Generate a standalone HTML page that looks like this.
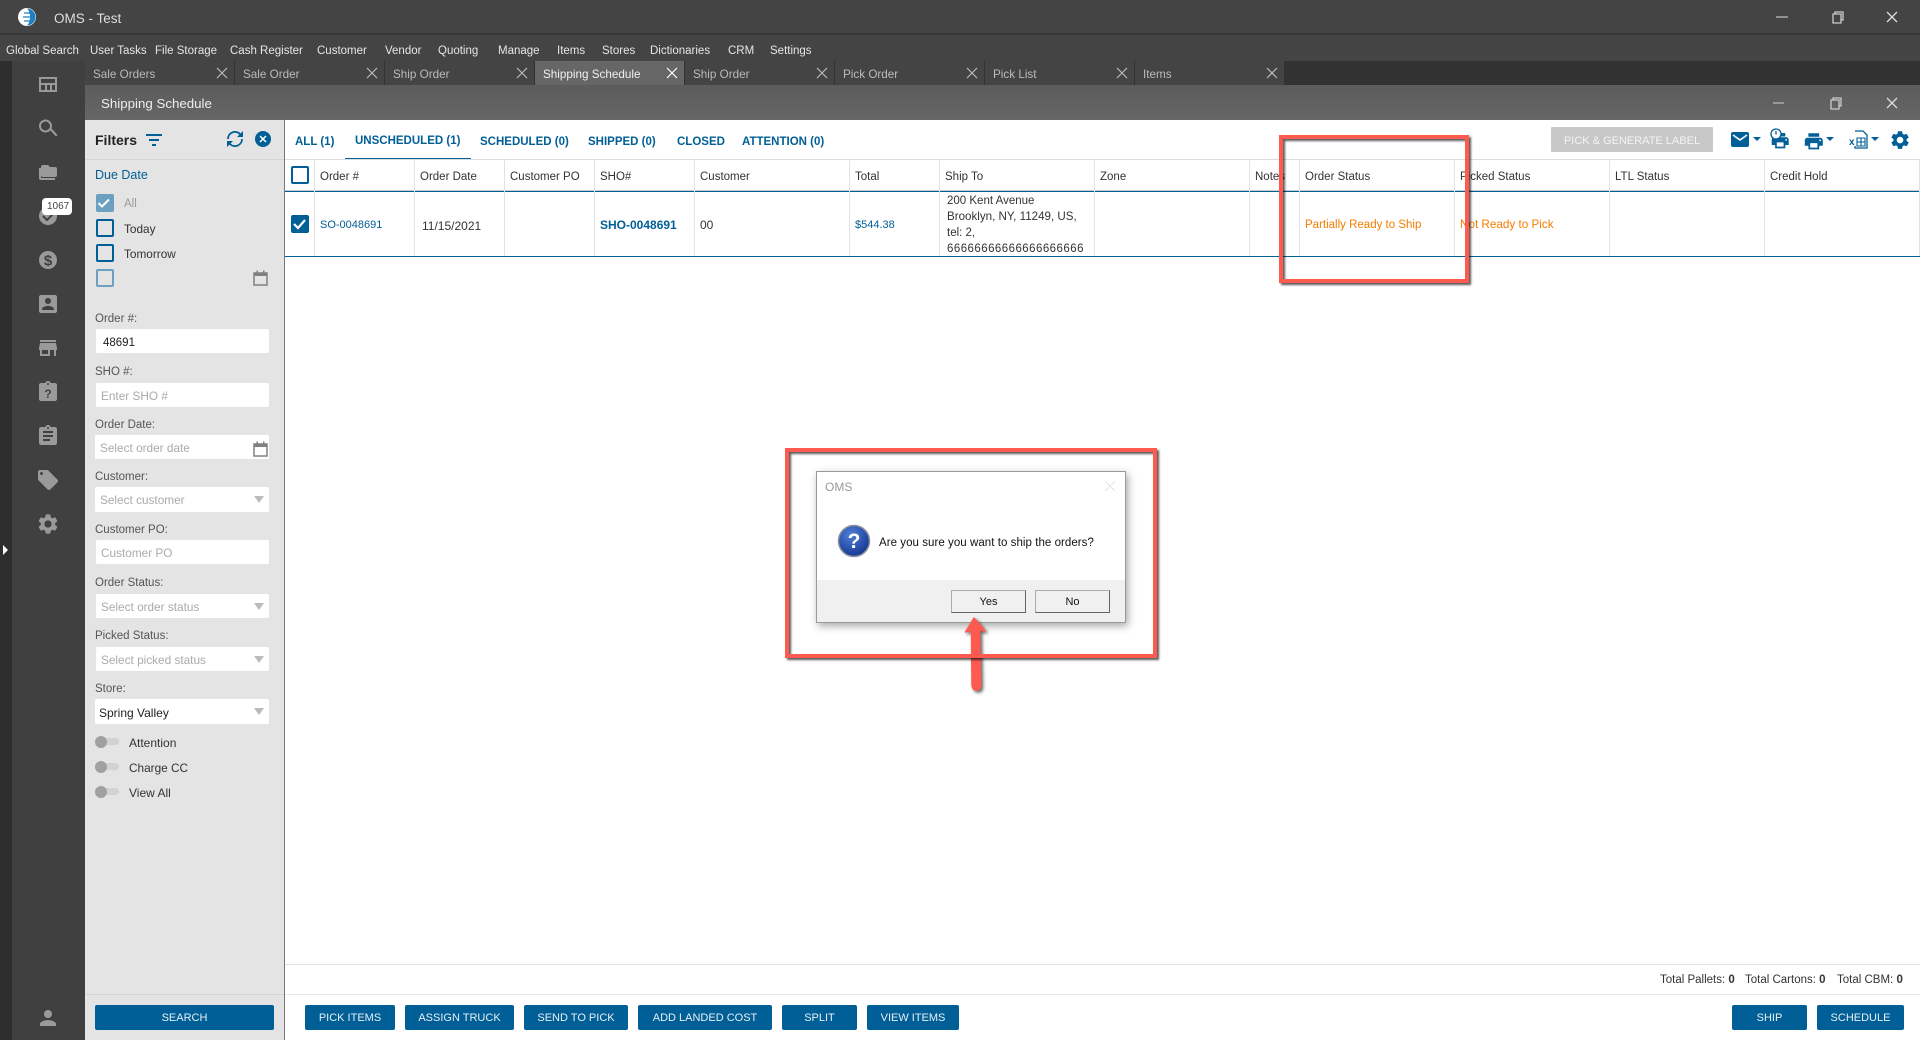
<!DOCTYPE html>
<html><head><meta charset="utf-8"><title>OMS - Test</title>
<style>
html,body{margin:0;padding:0;width:1920px;height:1040px;overflow:hidden;background:#fff;font-family:"Liberation Sans",sans-serif;}
div,span{position:absolute;box-sizing:border-box;}
.t{white-space:nowrap;line-height:16px;font-size:12px;color:#333;}
.m{color:#e6e6e6;font-size:11.5px;top:43px;}
.tab{top:61px;width:149px;height:24px;background:#444;}
.tab .t{left:8px;top:6px;color:#bbb;font-size:11.7px;}
.tab svg{position:absolute;left:131px;top:6px;}
.lb{left:95px;color:#555;font-size:11.5px;}
.in{left:96px;width:173px;height:24px;background:#fff;border-radius:2px;}
.in .t{left:5px;top:5px;color:#aaa;font-size:11.8px;}
.ar{width:0;height:0;border-left:5px solid transparent;border-right:5px solid transparent;border-top:7px solid #bbb;right:5px;top:9px;}
.cb{left:96px;width:18px;height:18px;border:2px solid #005f96;border-radius:2px;}
.tg{left:95px;width:24px;height:7px;border-radius:4px;background:#d2d2d2;}
.tg:after{content:"";position:absolute;left:0;top:-2.5px;width:12px;height:12px;border-radius:50%;background:#a0a0a0;}
.tab2{top:134px;color:#005f96;font-weight:bold;font-size:11.5px;}
.h{top:169px;color:#333;font-size:11.5px;}
.v{top:160px;width:1px;height:96px;background:#dfe5e8;}
.btn{top:1005px;height:25px;background:#005f96;border-radius:2px;color:#e8f0f5;font-size:11px;line-height:27px;text-align:center;white-space:nowrap;}
.red{border:4px solid #ff5a4f;box-shadow:2px 2px 2px rgba(0,0,0,.65),inset 2px 2px 2px rgba(0,0,0,.65);}
</style></head><body>

<div style="left:0;top:0;width:1920px;height:61px;background:#444"></div>
<div style="left:0;top:33px;width:1920px;height:2px;background:#383838"></div>
<div style="left:0;top:61px;width:1920px;height:24px;background:#323232"></div>
<div style="left:0;top:61px;width:12px;height:979px;background:#2e2e2e"></div>
<div style="left:12px;top:61px;width:73px;height:979px;background:#404040"></div>
<div style="left:85px;top:85px;width:1835px;height:35px;background:linear-gradient(#5c5c5c,#666)"></div>

<span class="t" style="left:54px;top:11px;font-size:13.5px;color:#ddd">OMS - Test</span>
<span class="t m" style="left:6px">Global Search</span>
<span class="t m" style="left:90px">User Tasks</span>
<span class="t m" style="left:155px">File Storage</span>
<span class="t m" style="left:230px">Cash Register</span>
<span class="t m" style="left:317px">Customer</span>
<span class="t m" style="left:385px">Vendor</span>
<span class="t m" style="left:438px">Quoting</span>
<span class="t m" style="left:498px">Manage</span>
<span class="t m" style="left:557px">Items</span>
<span class="t m" style="left:602px">Stores</span>
<span class="t m" style="left:650px">Dictionaries</span>
<span class="t m" style="left:728px">CRM</span>
<span class="t m" style="left:770px">Settings</span>

<div class="tab" style="left:85px"><span class="t">Sale Orders</span><svg width="12" height="12"><path d="M1 1L11 11M11 1L1 11" stroke="#bbb" stroke-width="1.2"/></svg></div>
<div class="tab" style="left:235px"><span class="t">Sale Order</span><svg width="12" height="12"><path d="M1 1L11 11M11 1L1 11" stroke="#bbb" stroke-width="1.2"/></svg></div>
<div class="tab" style="left:385px"><span class="t">Ship Order</span><svg width="12" height="12"><path d="M1 1L11 11M11 1L1 11" stroke="#bbb" stroke-width="1.2"/></svg></div>
<div class="tab" style="left:535px;background:#666"><span class="t" style="color:#f0f0f0">Shipping Schedule</span><svg width="12" height="12"><path d="M1 1L11 11M11 1L1 11" stroke="#fff" stroke-width="1.2"/></svg></div>
<div class="tab" style="left:685px"><span class="t">Ship Order</span><svg width="12" height="12"><path d="M1 1L11 11M11 1L1 11" stroke="#bbb" stroke-width="1.2"/></svg></div>
<div class="tab" style="left:835px"><span class="t">Pick Order</span><svg width="12" height="12"><path d="M1 1L11 11M11 1L1 11" stroke="#bbb" stroke-width="1.2"/></svg></div>
<div class="tab" style="left:985px"><span class="t">Pick List</span><svg width="12" height="12"><path d="M1 1L11 11M11 1L1 11" stroke="#bbb" stroke-width="1.2"/></svg></div>
<div class="tab" style="left:1135px"><span class="t">Items</span><svg width="12" height="12"><path d="M1 1L11 11M11 1L1 11" stroke="#bbb" stroke-width="1.2"/></svg></div>

<span class="t" style="left:101px;top:96px;font-size:13.3px;color:#eee">Shipping Schedule</span>

<!-- Filters -->
<div style="left:85px;top:120px;width:200px;height:920px;background:#e4e4e4;border-right:1px solid #777"></div>
<div style="left:85px;top:159px;width:199px;height:1px;background:#d4d4d4"></div>
<div style="left:85px;top:994px;width:199px;height:1px;background:#d4d4d4"></div>
<span class="t" style="left:95px;top:132px;font-size:14px;font-weight:bold;color:#222">Filters</span>
<span class="t" style="left:95px;top:167px;font-size:12.5px;color:#005f96">Due Date</span>

<div class="cb" style="top:194px;background:#6ba0c0;border-color:#6ba0c0"></div>
<span class="t" style="left:124px;top:196px;color:#999;font-size:11.5px">All</span>
<div class="cb" style="top:219px"></div>
<span class="t" style="left:124px;top:221px;font-size:11.8px">Today</span>
<div class="cb" style="top:244px"></div>
<span class="t" style="left:124px;top:246px;font-size:11.8px">Tomorrow</span>
<div class="cb" style="top:269px;border-color:#6ba0c0"></div>

<span class="t lb" style="top:311px">Order #:</span>
<div class="in" style="top:329px"><span class="t" style="left:7px;top:6px;color:#222;font-size:11.5px">48691</span></div>
<span class="t lb" style="top:364px">SHO #:</span>
<div class="in" style="top:383px"><span class="t">Enter SHO #</span></div>
<span class="t lb" style="top:417px">Order Date:</span>
<div class="in" style="top:435px;left:95px;width:174px;border-radius:0"><span class="t">Select order date</span></div>
<span class="t lb" style="top:469px">Customer:</span>
<div class="in" style="top:487px;left:95px;width:174px;height:25px"><span class="t">Select customer</span><span class="ar"></span></div>
<span class="t lb" style="top:522px">Customer PO:</span>
<div class="in" style="top:540px"><span class="t">Customer PO</span></div>
<span class="t lb" style="top:575px">Order Status:</span>
<div class="in" style="top:594px"><span class="t">Select order status</span><span class="ar"></span></div>
<span class="t lb" style="top:628px">Picked Status:</span>
<div class="in" style="top:647px"><span class="t">Select picked status</span><span class="ar"></span></div>
<span class="t lb" style="top:681px">Store:</span>
<div class="in" style="top:699px;left:95px;width:174px;height:25px"><span class="t" style="left:4px;top:6px;color:#222;font-size:12px">Spring Valley</span><span class="ar"></span></div>
<div class="tg" style="top:738px"></div><span class="t" style="left:129px;top:735px;font-size:12px">Attention</span>
<div class="tg" style="top:763px"></div><span class="t" style="left:129px;top:760px;font-size:11.8px">Charge CC</span>
<div class="tg" style="top:788px"></div><span class="t" style="left:129px;top:785px;font-size:12px">View All</span>
<div class="btn" style="left:95px;width:179px">SEARCH</div>

<!-- Tabs -->
<span class="t tab2" style="left:295px">ALL (1)</span>
<span class="t tab2" style="left:355px;top:133px">UNSCHEDULED (1)</span>
<span class="t tab2" style="left:480px">SCHEDULED (0)</span>
<span class="t tab2" style="left:588px">SHIPPED (0)</span>
<span class="t tab2" style="left:677px">CLOSED</span>
<span class="t tab2" style="left:742px">ATTENTION (0)</span>
<div style="left:345px;top:158px;width:126px;height:2px;background:#005f96"></div>
<div style="left:285px;top:159px;width:1635px;height:1px;background:#ddd"></div>

<div class="btn" style="left:1551px;top:127px;width:162px;background:#c8c8c8;color:#f4f4f4;border-radius:1px;font-size:11px;line-height:28px">PICK &amp; GENERATE LABEL</div>

<!-- Table -->
<div style="left:285px;top:190px;width:1635px;height:1px;background:#ccc"></div>
<div style="left:285px;top:191px;width:1635px;height:1px;background:#005f96"></div>
<div style="left:285px;top:256px;width:1635px;height:1px;background:#005f96"></div>
<div class="v" style="left:314px"></div><div class="v" style="left:414px"></div><div class="v" style="left:504px"></div><div class="v" style="left:594px"></div><div class="v" style="left:694px"></div><div class="v" style="left:849px"></div><div class="v" style="left:939px"></div><div class="v" style="left:1094px"></div><div class="v" style="left:1249px"></div><div class="v" style="left:1299px"></div><div class="v" style="left:1454px"></div><div class="v" style="left:1609px"></div><div class="v" style="left:1764px"></div><div class="v" style="left:1919px"></div>

<div class="cb" style="left:291px;top:166px"></div>
<div class="cb" style="left:291px;top:215px;background:#005f96"></div>
<span class="t h" style="left:320px">Order #</span>
<span class="t h" style="left:420px">Order Date</span>
<span class="t h" style="left:510px">Customer PO</span>
<span class="t h" style="left:600px">SHO#</span>
<span class="t h" style="left:700px">Customer</span>
<span class="t h" style="left:855px">Total</span>
<span class="t h" style="left:945px">Ship To</span>
<span class="t h" style="left:1100px">Zone</span>
<span class="t h" style="left:1255px">Notes</span>
<span class="t h" style="left:1305px">Order Status</span>
<span class="t h" style="left:1460px">Picked Status</span>
<span class="t h" style="left:1615px">LTL Status</span>
<span class="t h" style="left:1770px">Credit Hold</span>

<span class="t" style="left:320px;top:217px;color:#005f96;font-size:11px">SO-0048691</span>
<span class="t" style="left:422px;top:218px;font-size:12px">11/15/2021</span>
<span class="t" style="left:600px;top:217px;color:#005f96;font-weight:bold;font-size:12px">SHO-0048691</span>
<span class="t" style="left:700px;top:217px;font-size:12px">00</span>
<span class="t" style="left:855px;top:217px;color:#005f96;font-size:11px">$544.38</span>
<span class="t" style="left:947px;top:193px;font-size:11.5px">200 Kent Avenue</span>
<span class="t" style="left:947px;top:209px;font-size:11.6px">Brooklyn, NY, 11249, US,</span>
<span class="t" style="left:947px;top:225px;font-size:11.5px">tel: 2,</span>
<span class="t" style="left:947px;top:241px;font-size:11.5px;letter-spacing:.45px">66666666666666666666</span>
<span class="t" style="left:1305px;top:217px;color:#f47c00;font-size:11.5px">Partially Ready to Ship</span>
<span class="t" style="left:1460px;top:217px;color:#f47c00;font-size:11.7px">Not Ready to Pick</span>

<!-- Bottom -->
<div style="left:285px;top:964px;width:1635px;height:1px;background:#e2e2e2"></div>
<div style="left:285px;top:994px;width:1635px;height:1px;background:#e8e8e8"></div>
<span class="t" style="left:1660px;top:972px;font-size:11.5px">Total Pallets: <b>0</b></span>
<span class="t" style="left:1745px;top:972px;font-size:11.5px">Total Cartons: <b>0</b></span>
<span class="t" style="left:1837px;top:972px;font-size:11.5px">Total CBM: <b>0</b></span>
<div class="btn" style="left:305px;width:90px">PICK ITEMS</div>
<div class="btn" style="left:405px;width:109px">ASSIGN TRUCK</div>
<div class="btn" style="left:524px;width:104px">SEND TO PICK</div>
<div class="btn" style="left:638px;width:134px">ADD LANDED COST</div>
<div class="btn" style="left:782px;width:75px">SPLIT</div>
<div class="btn" style="left:867px;width:92px">VIEW ITEMS</div>
<div class="btn" style="left:1732px;width:75px">SHIP</div>
<div class="btn" style="left:1817px;width:87px">SCHEDULE</div>

<!-- Icons overlay -->
<svg style="position:absolute;left:0;top:0" width="1920" height="1040" viewBox="0 0 1920 1040">
<circle cx="27" cy="17" r="9" fill="#fff"/>
<path d="M27 8.500A8.500 8.500 0 0 1 27 25.500C31 22 31 12 27 8.500Z" fill="#1f7fc4"/>
<path d="M24 13h8M23 17h9M24 21h8" stroke="#1f7fc4" stroke-width="1.3"/>
<path d="M1776 17h12" stroke="#aaa" stroke-width="1.5"/>
<path d="M1833 14h8v9h-8zM1835 14v-2h8v8h-2" fill="none" stroke="#ccc" stroke-width="1.3"/>
<path d="M1887 12L1897 22M1897 12L1887 22" stroke="#ddd" stroke-width="1.3"/>
<path d="M1773 103h11" stroke="#aaa" stroke-width="1.5"/>
<path d="M1831 100h8v9h-8zM1833 100v-2h8v8h-2" fill="none" stroke="#ccc" stroke-width="1.3"/>
<path d="M1887 98L1897 108M1897 98L1887 108" stroke="#ddd" stroke-width="1.3"/>

<!-- sidebar -->
<g fill="#9a9a9a">
<path d="M39 77h18v15H39zM41 79v4h14v-4zM41 85v5h4v-5zM47 85v5h3v-5zM52 85v5h3v-5z" fill-rule="evenodd"/>
<path d="M45.500 119.500a6.500 6.500 0 1 0 0 13 6.500 6.500 0 0 0 0-13zm0 2a4.500 4.500 0 1 1 0 9 4.500 4.500 0 0 1 0-9z" fill-rule="evenodd"/>
<path d="M50 130l1.500-1.500 6 6.500-1.500 1.500z"/>
<path d="M39 168h2v10h14v2H41a2 2 0 0 1-2-2zM43 165h5l2 2h5a2 2 0 0 1 2 2v6a2 2 0 0 1-2 2H43a2 2 0 0 1-2-2v-8a2 2 0 0 1 2-2z"/>
<circle cx="48" cy="216" r="9"/>
<circle cx="48" cy="260" r="9"/>
<g transform="translate(36,292)"><path d="M3 5v14c0 1.100.89 2 2 2h14c1.100 0 2-.9 2-2V5c0-1.100-.9-2-2-2H5c-1.110 0-2 .9-2 2zm12 4c0 1.660-1.340 3-3 3s-3-1.340-3-3 1.340-3 3-3 3 1.340 3 3zm-9 8c0-2 4-3.100 6-3.100s6 1.100 6 3.100v1H6v-1z"/></g>
<g transform="translate(36,336)"><path d="M20 4H4v2h16V4zm1 10v-2l-1-5H4l-1 5v2h1v6h10v-6h4v6h2v-6h1zm-9 4H6v-4h6v4z"/></g>
<g transform="translate(36,380)"><path d="M19 3h-4.180C14.400 1.840 13.300 1 12 1c-1.300 0-2.400.84-2.820 2H5c-1.100 0-2 .9-2 2v14c0 1.100.9 2 2 2h14c1.100 0 2-.9 2-2V5c0-1.100-.9-2-2-2zm-7 0c.55 0 1 .45 1 1s-.45 1-1 1-1-.45-1-1 .45-1 1-1z"/></g>
<g transform="translate(36,424)"><path d="M19 3h-4.180C14.400 1.840 13.300 1 12 1c-1.300 0-2.400.84-2.820 2H5c-1.100 0-2 .9-2 2v14c0 1.100.9 2 2 2h14c1.100 0 2-.9 2-2V5c0-1.100-.9-2-2-2zm-7 0c.55 0 1 .45 1 1s-.45 1-1 1-1-.45-1-1 .45-1 1-1zm2 14H7v-2h7v2zm3-4H7v-2h10v2zm0-4H7V7h10v2z"/></g>
<g transform="translate(36,468)"><path d="M21.410 11.580l-9-9C12.050 2.220 11.550 2 11 2H4c-1.100 0-2 .9-2 2v7c0 .55.22 1.050.59 1.420l9 9c.36.36.86.58 1.410.58.55 0 1.050-.22 1.410-.59l7-7c.37-.36.59-.86.59-1.410 0-.55-.23-1.060-.59-1.420zM5.500 7C4.670 7 4 6.330 4 5.500S4.670 4 5.500 4 7 4.670 7 5.500 6.330 7 5.500 7z"/></g>
<g transform="translate(36,512)"><path d="M19.140 12.940c.04-.3.06-.61.06-.94 0-.32-.02-.64-.07-.94l2.030-1.580c.18-.14.23-.41.12-.61l-1.920-3.320c-.12-.22-.37-.29-.59-.22l-2.390.96c-.5-.38-1.030-.7-1.620-.94l-.36-2.540c-.04-.24-.24-.41-.48-.41h-3.840c-.24 0-.43.17-.47.41l-.36 2.540c-.59.24-1.130.57-1.620.94l-2.390-.96c-.22-.08-.47 0-.59.22L2.740 8.870c-.12.21-.08.47.12.61l2.030 1.580c-.05.3-.09.63-.09.94s.02.64.07.94l-2.030 1.580c-.18.14-.23.41-.12.61l1.920 3.320c.12.22.37.29.59.22l2.390-.96c.5.38 1.030.7 1.620.94l.36 2.540c.05.24.24.41.48.41h3.840c.24 0 .44-.17.47-.41l.36-2.540c.59-.24 1.130-.56 1.620-.94l2.390.96c.22.08.47 0 .59-.22l1.920-3.320c.12-.22.07-.47-.12-.61l-2.010-1.580zM12 15.600c-1.980 0-3.600-1.620-3.600-3.600s1.620-3.600 3.600-3.600 3.600 1.620 3.600 3.600-1.620 3.600-3.600 3.600z"/></g>
<g transform="translate(36,1006)"><path d="M12 12c2.210 0 4-1.790 4-4s-1.790-4-4-4-4 1.790-4 4 1.790 4 4 4zm0 2c-2.670 0-8 1.340-8 4v2h16v-2c0-2.660-5.330-4-8-4z"/></g>
</g>
<path d="M43 216l4 4 7-7" fill="none" stroke="#404040" stroke-width="2"/>
<text x="48" y="265.500" text-anchor="middle" font-family="Liberation Sans" font-size="15" fill="#404040" font-weight="bold">$</text>
<text x="48" y="398" text-anchor="middle" font-family="Liberation Sans" font-size="12" fill="#404040" font-weight="bold">?</text>
<path d="M3 545l5 5-5 5z" fill="#fff"/>

<!-- filter icons -->
<path d="M146 135h16M149 140h10M152 145h4" stroke="#005f96" stroke-width="2"/>
<path d="M228 139a7 7 0 0 1 12-5l2 2M242 139a7 7 0 0 1-12 5l-2-2" fill="none" stroke="#005f96" stroke-width="1.800"/>
<path d="M243 131v6h-6zM227 147v-6h6z" fill="#005f96"/>
<circle cx="263" cy="139" r="8" fill="#005f96"/>
<path d="M260 136l6 6M266 136l-6 6" stroke="#fff" stroke-width="1.500"/>
<path d="M98.500 203l3.500 3.500 7-7" fill="none" stroke="#fff" stroke-width="2"/>
<path d="M294 224l4 4 7-8" fill="none" stroke="#fff" stroke-width="2.200"/>
<path d="M254 273h13v12h-13z" fill="#e4e4e4" stroke="#808080" stroke-width="1.500"/><path d="M254 273h13v3h-13zM256.500 270.500h1.500v3h-1.500zM263 270.500h1.500v3H263z" fill="#808080"/>
<path d="M254 444h13v12h-13z" fill="#fff" stroke="#808080" stroke-width="1.500"/><path d="M254 444h13v3h-13zM256.500 441.500h1.500v3h-1.500zM263 441.500h1.500v3H263z" fill="#808080"/>

<!-- toolbar icons -->
<g fill="#005f96">
<path d="M1733 132h14a2 2 0 0 1 2 2v11a2 2 0 0 1-2 2h-14a2 2 0 0 1-2-2v-11a2 2 0 0 1 2-2z"/>
<path d="M1753 137h8l-4 4zM1826 137h8l-4 4zM1871 137h8l-4 4z"/>
<g transform="translate(1803,130.500) scale(.9)"><path d="M19 8H5c-1.660 0-3 1.340-3 3v6h4v4h12v-4h4v-6c0-1.660-1.340-3-3-3zm-3 11H8v-5h8v5zm3-7c-.55 0-1-.45-1-1s.45-1 1-1 1 .45 1 1-.45 1-1 1zm-1-9H6v4h12V3z"/></g>
<g transform="translate(1770,130.500) scale(.85)"><path d="M19 8H5c-1.660 0-3 1.340-3 3v6h4v4h12v-4h4v-6c0-1.660-1.340-3-3-3zm-3 11H8v-5h8v5zm3-7c-.55 0-1-.45-1-1s.45-1 1-1 1 .45 1 1-.45 1-1 1zm-1-9H6v4h12V3z"/></g>
<g transform="translate(1889,129) scale(.92)"><path d="M19.140 12.940c.04-.3.06-.61.06-.94 0-.32-.02-.64-.07-.94l2.030-1.580c.18-.14.23-.41.12-.61l-1.920-3.320c-.12-.22-.37-.29-.59-.22l-2.390.96c-.5-.38-1.030-.7-1.620-.94l-.36-2.540c-.04-.24-.24-.41-.48-.41h-3.840c-.24 0-.43.17-.47.41l-.36 2.540c-.59.24-1.130.57-1.620.94l-2.390-.96c-.22-.08-.47 0-.59.22L2.740 8.870c-.12.21-.08.47.12.61l2.030 1.580c-.05.3-.09.63-.09.94s.02.64.07.94l-2.030 1.580c-.18.14-.23.41-.12.61l1.920 3.320c.12.22.37.29.59.22l2.390-.96c.5.38 1.030.7 1.620.94l.36 2.540c.05.24.24.41.48.41h3.840c.24 0 .44-.17.47-.41l.36-2.540c.59-.24 1.130-.56 1.620-.94l2.390.96c.22.08.47 0 .59-.22l1.920-3.320c.12-.22.07-.47-.12-.61l-2.010-1.580zM12 15.600c-1.980 0-3.600-1.620-3.600-3.600s1.620-3.600 3.600-3.600 3.600 1.620 3.600 3.600-1.620 3.600-3.600 3.600z"/></g>
</g>
<path d="M1733 135l7 5 7-5" fill="none" stroke="#fff" stroke-width="1.600"/>
<circle cx="1776" cy="134" r="5" fill="#fff" stroke="#005f96" stroke-width="1.300"/><path d="M1776 131v3.500" stroke="#005f96" stroke-width="1.300"/>
<path d="M1855 131h8l4 4v13h-12v-2" fill="none" stroke="#005f96" stroke-width="1.300"/>
<path d="M1857 138h8v8h-8zM1861 138v8M1857 142h8" fill="none" stroke="#005f96" stroke-width="1.100"/>
<text x="1849" y="145" font-family="Liberation Sans" font-size="10" font-weight="bold" fill="#005f96">x</text>
</svg>

<div style="left:42px;top:198px;width:30px;height:17px;background:#fff;border-radius:4px"></div>
<span class="t" style="left:47px;top:199px;font-size:10px;color:#444">1067</span>

<!-- Dialog -->
<div style="left:816px;top:471px;width:310px;height:152px;background:#fff;border:1px solid #9a9a9a;box-shadow:2px 3px 8px rgba(0,0,0,.35)">
<div style="left:0;top:108px;width:308px;height:42px;background:#f0f0f0"></div>
</div>
<span class="t" style="left:825px;top:479px;color:#999;font-size:12px">OMS</span>
<span class="t" style="left:879px;top:535px;color:#111;font-size:11.5px;letter-spacing:.05px">Are you sure you want to ship the orders?</span>
<div style="left:951px;top:590px;width:75px;height:23px;background:#f0f0f0;border:1px solid #adadad;border-right-color:#666;border-bottom-color:#666;text-align:center;font-size:11px;line-height:23px;color:#111">Yes</div>
<div style="left:1035px;top:590px;width:75px;height:23px;background:#f0f0f0;border:1px solid #adadad;border-right-color:#666;border-bottom-color:#666;text-align:center;font-size:11px;line-height:23px;color:#111">No</div>
<svg style="position:absolute;left:800px;top:460px" width="340" height="240" viewBox="800 460 340 240">
<defs><radialGradient id="q" cx=".4" cy=".3" r=".8"><stop offset="0" stop-color="#4f7fd8"/><stop offset="1" stop-color="#0f2f8a"/></radialGradient></defs>
<circle cx="854" cy="541" r="15.500" fill="url(#q)" stroke="#8a8f9a" stroke-width="1.500"/>
<text x="854" y="548" text-anchor="middle" font-family="Liberation Sans" font-size="21" font-weight="bold" fill="#fff">?</text>
<path d="M1105 481l10 10M1115 481l-10 10" stroke="#e4e4e4" stroke-width="1"/>
<path d="M974 618l11 13-5.500-1 1 55q0 5-4 5t-4.500-5l-.5-55-6 2z" fill="#ff5a4f" stroke="#ff5a4f" stroke-width="1.500" stroke-linejoin="round" style="filter:drop-shadow(2px 2px 1.500px rgba(0,0,0,.6))"/>
</svg>

<div class="red" style="left:785px;top:448px;width:372px;height:210px"></div>
<div class="red" style="left:1279px;top:135px;width:190px;height:148px"></div>

</body></html>
